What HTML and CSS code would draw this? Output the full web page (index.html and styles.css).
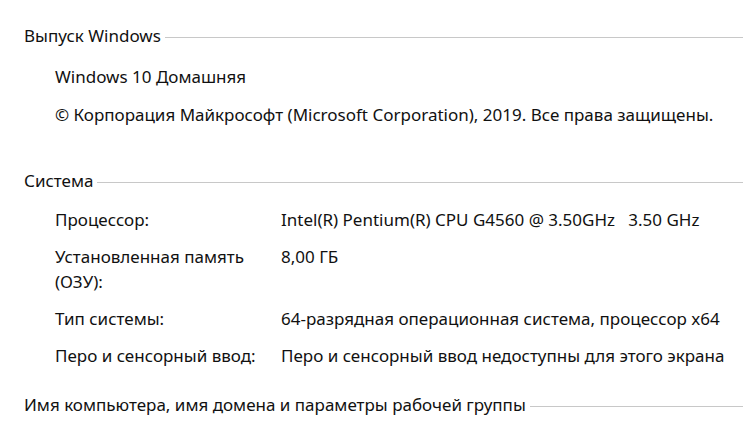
FILE: index.html
```html
<!DOCTYPE html>
<html lang="ru">
<head>
  <meta charset="UTF-8">
  <title>О системе</title>
  <meta name="viewport" content="width=device-width, initial-scale=1">
  <link rel="stylesheet" href="styles.css">
</head>
<body>
  <div class="page">
    <section class="group group-edition">
      <h2 class="group-title">Выпуск Windows</h2>
      <div class="group-body">
        <p class="line">Windows 10 Домашняя</p>
        <p class="line">© Корпорация Майкрософт (Microsoft Corporation), 2019. Все права защищены.</p>
      </div>
    </section>

    <section class="group">
      <h2 class="group-title">Система</h2>
      <div class="group-body props">
        <div class="prop-name">Процессор:</div>
        <div class="prop-value">Intel(R) Pentium(R) CPU G4560 @ 3.50GHz &nbsp; 3.50 GHz</div>
        <div class="prop-name">Установленная память (ОЗУ):</div>
        <div class="prop-value">8,00 ГБ</div>
        <div class="prop-name">Тип системы:</div>
        <div class="prop-value">64-разрядная операционная система, процессор x64</div>
        <div class="prop-name">Перо и сенсорный ввод:</div>
        <div class="prop-value">Перо и сенсорный ввод недоступны для этого экрана</div>
      </div>
    </section>

    <section class="group">
      <h2 class="group-title">Имя компьютера, имя домена и параметры рабочей группы</h2>
    </section>
  </div>
</body>
</html>
```

FILE: styles.css
```css
body {
  margin: 0;
  background: #fff;
  color: #111;
  font-family: 'Noto Sans', 'Open Sans', Arial, sans-serif;
  font-size: 17px;
}
.page {
  padding: 24px 0 0 24px;
}
.group {
  margin-bottom: 25px;
}
.group-edition {
  margin-bottom: 42px;
}
.group-title {
  display: flex;
  align-items: center;
  margin: 0;
  font-size: 17px;
  font-weight: normal;
  line-height: 24px;
  white-space: nowrap;
}
.group-title::after {
  content: "";
  flex: 1;
  height: 1px;
  margin-left: 4px;
  margin-top: 3px;
  background: #c8c8c8;
}
.group-body {
  padding: 14px 0 0 31px;
}
.line {
  margin: 13px 0 0;
  line-height: 25px;
}
.line:first-child {
  margin-top: 2px;
}
.props {
  display: grid;
  grid-template-columns: 226px 1fr;
  row-gap: 12px;
  line-height: 25px;
}
.prop-name {
  padding-right: 16px;
}
```
